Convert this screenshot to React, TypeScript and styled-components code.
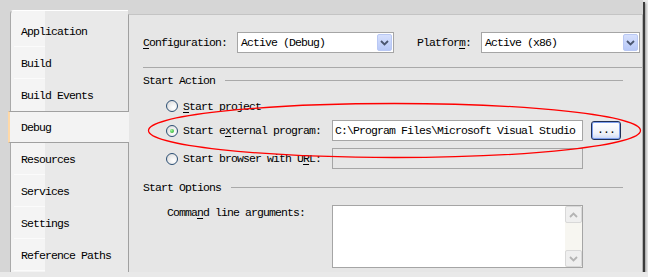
import React from 'react';
import styled, { createGlobalStyle } from 'styled-components';

const Global = createGlobalStyle`
  html, body { margin: 0; padding: 0; background: #e9e9e9; }
  body {
    font-family: "Liberation Mono", "DejaVu Sans Mono", monospace;
    font-size: 11.5px;
    letter-spacing: -0.9px;
    color: #000;
  }
`;

const Frame = styled.div`
  position: relative;
  width: 643px;
  height: 272px;
  background: #d6d6d6;
  box-shadow: 2px 2px 0 #3c3c3c, 3px 3px 2px rgba(0, 0, 0, 0.35);
  display: flex;
  align-items: stretch;
`;

const TabList = styled.div`
  margin: 10px 0 0 10px;
  width: 117px;
  padding-top: 4px;
  border-left: 1px solid #a9a9a9;
  border-top: 1px solid #ffffff;
  border-top-left-radius: 4px;
  background: linear-gradient(to right, #f4f4f4 0, #f4f4f4 34px, #e9e9e9 34px);
  display: flex;
  flex-direction: column;
`;

const Tab = styled.div<{ $active?: boolean; $sep?: boolean }>`
  position: relative;
  height: 32px;
  display: flex;
  align-items: center;
  box-sizing: border-box;
  padding-left: ${p => (p.$active ? 11 : 10)}px;
  margin-left: ${p => (p.$active ? -3 : 0)}px;
  margin-right: ${p => (p.$active ? -1 : 0)}px;
  background: ${p => (p.$active ? '#f3f3f3' : 'transparent')};
  border-left: ${p => (p.$active ? '2px solid #ffd9a8' : 'none')};
  border-top: ${p => (p.$active ? '1px solid #a0a0a0' : 'none')};
  border-bottom: ${p => (p.$active ? '1px solid #a0a0a0' : 'none')};
  z-index: ${p => (p.$active ? 2 : 0)};
  &::after {
    content: '';
    display: ${p => (p.$sep ? 'block' : 'none')};
    position: absolute;
    left: 3px;
    bottom: 0;
    width: 31px;
    height: 1px;
    background: #fbfbfb;
  }
`;

const Panel = styled.div`
  position: relative;
  flex: 1;
  margin-top: 14px;
  background: #e6e6e6;
  border-left: 1px solid #a0a0a0;
  border-top: 1px solid #c4c4c4;
  border-right: 1px solid #b4b4b4;
  padding-left: 14px;
  display: flex;
  flex-direction: column;
`;

const ConfigRow = styled.div`
  margin-top: 17px;
  height: 21px;
  display: flex;
  align-items: center;
`;

const Label = styled.span<{ $gap?: number }>`
  margin-left: ${p => p.$gap ?? 0}px;
  white-space: pre;
`;

const Key = styled.span`
  text-decoration: underline;
  text-underline-offset: 2px;
`;

const Select = styled.div<{ $w: number; $gap: number }>`
  width: ${p => p.$w}px;
  height: 21px;
  box-sizing: border-box;
  margin-left: ${p => p.$gap}px;
  background: #fff;
  border: 1px solid #a5a5a5;
  display: flex;
  align-items: center;
  justify-content: space-between;
  padding-left: 3px;
`;

const DropBtn = styled.div`
  width: 15px;
  height: 17px;
  margin-right: 1px;
  box-sizing: border-box;
  border: 1px solid #b9c8f4;
  border-radius: 2px;
  background: linear-gradient(to bottom, #d6e0fd, #b8c9f8);
  display: flex;
  align-items: center;
  justify-content: center;
`;

const Rule = styled.div`
  margin-top: 14px;
  height: 1px;
  background: #a9a9a9;
`;

const GroupHeader = styled.div<{ $top: number }>`
  margin-top: ${p => p.$top}px;
  margin-right: 19px;
  height: 12px;
  display: flex;
  align-items: center;
  &::after {
    content: '';
    flex: 1;
    height: 1px;
    margin-left: 10px;
    background: #a9a9a9;
  }
`;

const OptionRow = styled.div<{ $top: number; $h: number }>`
  margin-top: ${p => p.$top}px;
  margin-left: 23px;
  height: ${p => p.$h}px;
  display: grid;
  grid-template-columns: 166px 251px 8px 30px;
  align-items: center;
`;

const RadioWrap = styled.div`
  display: flex;
  align-items: center;
  white-space: pre;
`;

const Radio = styled.span<{ $on?: boolean }>`
  width: 12px;
  height: 12px;
  box-sizing: border-box;
  border-radius: 50%;
  border: 1px solid #2c4f74;
  background: radial-gradient(circle at 65% 65%, #ffffff 0, #eeeeee 45%, #d2d2d2 100%);
  margin-right: 5px;
  display: flex;
  align-items: center;
  justify-content: center;
  &::after {
    content: '';
    display: ${p => (p.$on ? 'block' : 'none')};
    width: 4px;
    height: 4px;
    border-radius: 50%;
    background: radial-gradient(circle at 35% 35%, #9af59a, #19a019);
  }
`;

const TextBox = styled.div<{ $disabled?: boolean }>`
  height: 21px;
  box-sizing: border-box;
  border: 1px solid #a5a5a5;
  background: ${p => (p.$disabled ? '#e6e6e6' : '#fff')};
  display: flex;
  align-items: center;
  padding-left: 2px;
  white-space: pre;
  overflow: hidden;
`;

const BrowseBtn = styled.div`
  grid-column: 4;
  height: 19px;
  box-sizing: border-box;
  border: 1px solid #1f2f57;
  border-radius: 3px;
  background: linear-gradient(to bottom, #ffffff, #eef1f8 70%, #c9d6f6);
  box-shadow: inset 0 0 0 1px #7ea0ee;
  display: flex;
  align-items: center;
  justify-content: center;
  padding-bottom: 2px;
`;

const ArgsRow = styled.div`
  margin-top: 12px;
  margin-left: 24px;
  display: grid;
  grid-template-columns: 165px 251px;
  align-items: start;
`;

const ArgsLabel = styled.span`
  padding-top: 1px;
  white-space: pre;
`;

const ArgsBox = styled.div`
  height: 63px;
  box-sizing: border-box;
  border: 1px solid #a5a5a5;
  background: #fff;
  display: flex;
  justify-content: flex-end;
`;

const ScrollBar = styled.div`
  width: 17px;
  background: #f7f6f1;
  display: flex;
  flex-direction: column;
  justify-content: space-between;
`;

const ScrollBtn = styled.div`
  height: 17px;
  box-sizing: border-box;
  border: 1px solid #d8d8d8;
  border-radius: 2px;
  background: #efefef;
  display: flex;
  align-items: center;
  justify-content: center;
`;

const Overlay = styled.svg`
  position: absolute;
  left: 0;
  top: 0;
  pointer-events: none;
  z-index: 5;
`;

const Chevron = ({ color, up }: { color: string; up?: boolean }) => (
  <svg width="9" height="6" viewBox="0 0 9 6">
    <path
      d={up ? 'M1 5 L4.5 1.5 L8 5' : 'M1 1 L4.5 4.5 L8 1'}
      fill="none"
      stroke={color}
      strokeWidth="1.8"
    />
  </svg>
);

const tabs = [
  'Application',
  'Build',
  'Build Events',
  'Debug',
  'Resources',
  'Services',
  'Settings',
  'Reference Paths',
];

export default function App() {
  const active = 3;
  return (
    <>
      <Global />
      <Frame>
        <TabList>
          {tabs.map((t, i) => (
            <Tab key={t} $active={i === active} $sep={i !== active && i !== active - 1 && i < tabs.length}>
              {t}
            </Tab>
          ))}
        </TabList>
        <Panel>
          <ConfigRow>
            <Label>
              <Key>C</Key>onfiguration:
            </Label>
            <Select $w={157} $gap={10}>
              <span>Active (Debug)</span>
              <DropBtn>
                <Chevron color="#4a5670" />
              </DropBtn>
            </Select>
            <Label $gap={23}>
              Platfor<Key>m</Key>:
            </Label>
            <Select $w={159} $gap={10}>
              <span>Active (x86)</span>
              <DropBtn>
                <Chevron color="#4a5670" />
              </DropBtn>
            </Select>
          </ConfigRow>
          <Rule />
          <GroupHeader $top={6}>Start Action</GroupHeader>
          <OptionRow $top={10} $h={20}>
            <RadioWrap>
              <Radio />
              <span>
                <Key>S</Key>tart project
              </span>
            </RadioWrap>
          </OptionRow>
          <OptionRow $top={4} $h={21}>
            <RadioWrap>
              <Radio $on />
              <span>
                Start e<Key>x</Key>ternal program:
              </span>
            </RadioWrap>
            <TextBox>C:\Program Files\Microsoft Visual Studio</TextBox>
            <BrowseBtn>...</BrowseBtn>
          </OptionRow>
          <OptionRow $top={7} $h={21}>
            <RadioWrap>
              <Radio />
              <span>
                Start browser with U<Key>R</Key>L:
              </span>
            </RadioWrap>
            <TextBox $disabled />
          </OptionRow>
          <GroupHeader $top={12}>Start Options</GroupHeader>
          <ArgsRow>
            <ArgsLabel>
              Comma<Key>n</Key>d line arguments:
            </ArgsLabel>
            <ArgsBox>
              <ScrollBar>
                <ScrollBtn>
                  <Chevron color="#b4b4b4" up />
                </ScrollBtn>
                <ScrollBtn>
                  <Chevron color="#b4b4b4" />
                </ScrollBtn>
              </ScrollBar>
            </ArgsBox>
          </ArgsRow>
        </Panel>
        <Overlay width="643" height="272" viewBox="0 0 643 272">
          <ellipse cx="394.5" cy="130.5" rx="246" ry="27" fill="none" stroke="#ff0000" strokeWidth="1.3" />
        </Overlay>
      </Frame>
    </>
  );
}
